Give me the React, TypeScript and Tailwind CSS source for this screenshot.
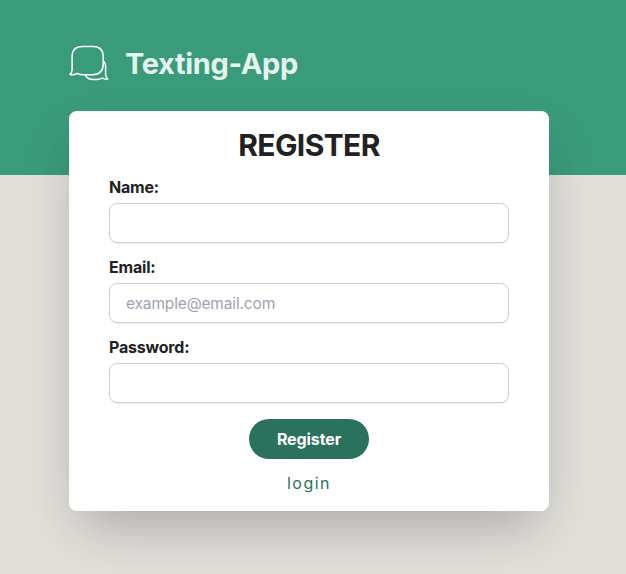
import React from "react";

const inputClass =
  "mt-1 block h-10 w-full rounded-lg border border-[#cdcdd7] bg-white px-4 text-[15.5px] tracking-[-0.15px] text-[#222] shadow-xs outline-none placeholder:text-[#9ca3af]";

function ChatLogo() {
  return (
    <svg className="h-10 w-10" viewBox="0 0 40 40" fill="none" stroke="white" strokeWidth="1.5" strokeLinejoin="round" strokeLinecap="round">
      <path d="M13.5 2.5H24C30.5 2.5 34.2 6.2 34.2 12.8V19.8C34.2 27 30.5 30.8 23.5 30.8H15C11.5 30.8 9.5 30.2 8 29.3C6 30.6 3.5 31 0.9 30.4C2.5 29.3 3.1 27.5 3.1 25.5V12.8C3.1 6.2 6.5 2.5 13.5 2.5Z" />
      <path d="M34.6 17.2C36 18.4 36.6 19.6 36.6 21.8V30C36.6 32.2 37.2 33.8 38.9 34.9C37 35.5 35 35.2 33.4 34C32 35 30.2 35.5 28 35.5H24C20.5 35.5 18.2 34.3 16.5 31.3" />
    </svg>
  );
}

function Field({ label, type, placeholder }: { label: string; type: string; placeholder?: string }) {
  return (
    <label className="mb-3 block">
      <span className="block h-6 text-base font-bold leading-6 tracking-[-0.2px]">{label}</span>
      <input className={inputClass} type={type} placeholder={placeholder} />
    </label>
  );
}

export default function App() {
  return (
    <div className="min-h-[574px] overflow-hidden bg-[#e0dfda] font-['Inter',sans-serif] text-[#222]">
      <header className="h-[175px] bg-[#3a9b7b] pl-[69px] pt-11">
        <div className="flex h-10 items-center gap-4">
          <ChatLogo />
          <h1 className="text-[29px] font-bold leading-9 tracking-[-0.35px] text-[#e5f3ee]">Texting-App</h1>
        </div>
      </header>
      <main className="relative -mt-16 ml-[69px] h-[400px] w-[480px] rounded-lg bg-white px-10 pt-4 shadow-2xl">
        <h2 className="mb-1 text-center text-[30px] font-bold leading-9 tracking-[-0.6px]">REGISTER</h2>
        <form className="pt-2">
          <Field label="Name:" type="text" />
          <Field label="Email:" type="email" placeholder="example@email.com" />
          <Field label="Password:" type="password" />
          <div className="flex flex-col items-center pt-1">
            <button type="button" className="h-10 w-[120px] rounded-full bg-[#2a725e] text-base font-bold tracking-[-0.1px] text-white">
              Register
            </button>
            <a className="mt-3 text-base leading-6 tracking-[1.5px] text-[#2a725e]">login</a>
          </div>
        </form>
      </main>
    </div>
  );
}
